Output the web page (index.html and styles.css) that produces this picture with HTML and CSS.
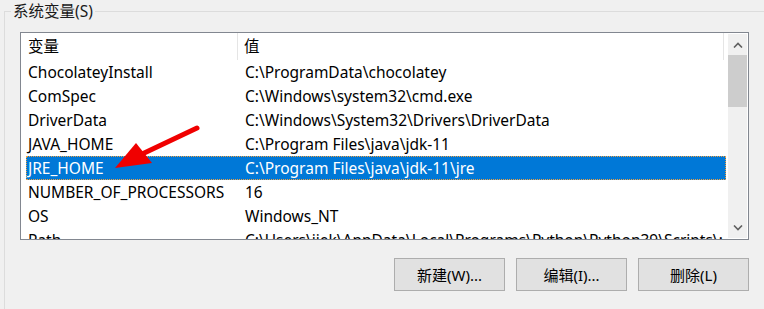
FILE: index.html
```html
<!DOCTYPE html>
<html lang="zh-CN">
<head>
    <meta charset="UTF-8">
    <title>系统变量</title>
    <link rel="stylesheet" href="styles.css">
</head>
<body>
    <fieldset class="group">
        <legend>系统变量(S)</legend>

        <div class="listbox">
            <div class="list">
                <div class="list-head">
                    <div class="head-name">变量</div>
                    <div class="head-value">值</div>
                </div>
                <div class="row"><span class="name">ChocolateyInstall</span><span class="value">C:\ProgramData\chocolatey</span></div>
                <div class="row"><span class="name">ComSpec</span><span class="value">C:\Windows\system32\cmd.exe</span></div>
                <div class="row"><span class="name">DriverData</span><span class="value">C:\Windows\System32\Drivers\DriverData</span></div>
                <div class="row"><span class="name">JAVA_HOME</span><span class="value">C:\Program Files\java\jdk-11</span></div>
                <div class="row selected"><span class="name">JRE_HOME</span><span class="value">C:\Program Files\java\jdk-11\jre</span></div>
                <div class="row"><span class="name">NUMBER_OF_PROCESSORS</span><span class="value">16</span></div>
                <div class="row"><span class="name">OS</span><span class="value">Windows_NT</span></div>
                <div class="row"><span class="name">Path</span><span class="value">C:\Users\jiek\AppData\Local\Programs\Python\Python39\Scripts\;</span></div>
            </div>
            <div class="scrollbar">
                <div class="sb-btn">
                    <svg width="10" height="6" viewBox="0 0 10 6"><path d="M1 5.5 L5 1.5 L9 5.5" fill="none" stroke="#606060" stroke-width="1.6"/></svg>
                </div>
                <div class="sb-thumb"></div>
                <div class="sb-track"></div>
                <div class="sb-btn">
                    <svg width="10" height="6" viewBox="0 0 10 6"><path d="M1 0.5 L5 4.5 L9 0.5" fill="none" stroke="#606060" stroke-width="1.6"/></svg>
                </div>
            </div>
        </div>

        <div class="buttons">
            <button class="btn">新建(W)...</button>
            <button class="btn">编辑(I)...</button>
            <button class="btn">删除(L)</button>
        </div>
    </fieldset>

    <!-- 标注箭头 -->
    <svg class="arrow" width="764" height="309" viewBox="0 0 764 309">
        <line x1="197" y1="128" x2="140" y2="155" stroke="#f00000" stroke-width="5" stroke-linecap="round"/>
        <polygon points="115,168 136,143 152,163" fill="#f00000"/>
    </svg>
</body>
</html>
```

FILE: styles.css
```css
body {
    margin: 0;
    padding-top: 1px;
    width: 764px;
    height: 309px;
    overflow: hidden;
    background-color: #f0f0f0;
    font-family: "Noto Sans", "Noto Sans CJK SC", sans-serif;
    font-size: 15.5px;
    color: #000;
    position: relative;
}

.group {
    margin: 0 0 0 4px;
    padding: 0 0 0 15px;
    border: 1px solid #dcdcdc;
    border-right: none;
    border-bottom: none;
    height: 320px;
}

.group legend {
    margin-left: -9px;
    padding: 0 2px;
    line-height: 20px;
    color: #1a1a1a;
}

.listbox {
    display: flex;
    margin-top: 11px;
    width: 727px;
    height: 206px;
    border: 1px solid #828790;
    background: #fff;
}

.list {
    flex: 1;
    overflow: hidden;
    white-space: nowrap;
}

.list-head {
    display: flex;
    height: 27px;
    line-height: 27px;
}

.head-name {
    width: 209px;
    padding-left: 7px;
    border-right: 1px solid #e5e5e5;
}

.head-value {
    width: 479px;
    padding-left: 6px;
    border-right: 1px solid #e5e5e5;
}

.row {
    display: flex;
    height: 24px;
    line-height: 23px;
    margin: 0 2px 0 5px;
    box-sizing: border-box;
    border: 1px solid transparent;
}

.row .name {
    width: 210px;
    padding-left: 1px;
}

.row .value {
    padding-left: 7px;
}

.selected {
    background-color: #0078d7;
    color: #fff;
    border: 1px dotted #f0a040;
}

.scrollbar {
    display: flex;
    flex-direction: column;
    width: 19px;
    margin: 1px 1px 1px 0;
    background: #f0f0f0;
}

.sb-btn {
    height: 21px;
    display: flex;
    align-items: center;
    justify-content: center;
}

.sb-thumb {
    height: 52px;
    background: #cdcdcd;
}

.sb-track {
    flex: 1;
}

.buttons {
    display: flex;
    justify-content: flex-end;
    gap: 11px;
    width: 729px;
    margin-top: 18px;
}

.btn {
    width: 111px;
    height: 33px;
    font-family: inherit;
    font-size: 15px;
    color: #000;
    background: #e1e1e1;
    border: 1px solid #adadad;
    border-radius: 0;
    padding: 0;
}

.arrow {
    position: absolute;
    left: 0;
    top: 0;
    pointer-events: none;
}
```
